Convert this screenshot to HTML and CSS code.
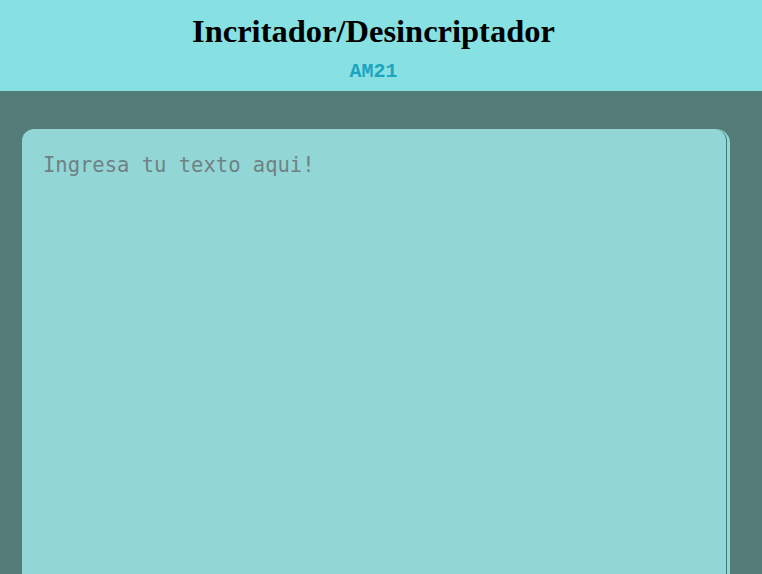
FILE: index.html
```html
<!DOCTYPE html>
<html lang="es">
<head>
<meta charset="utf-8">
<title>Incritador/Desincriptador</title>
<link rel="stylesheet" href="styles.css">
</head>
<body>
<header class="top">
  <h1 class="title">Incritador/Desincriptador</h1>
  <p class="brand">AM21</p>
</header>
<main class="content">
  <div class="pad">
    <div class="pad-inner">
      <span class="placeholder">Ingresa tu texto aqui!</span>
    </div>
  </div>
</main>
</body>
</html>
```

FILE: styles.css
```css
html, body {
  margin: 0;
  padding: 0;
  height: 100%;
}
body {
  background: #537b78;
  overflow: hidden;
}
.top {
  background: #87e0e1;
  height: 91px;
  padding-right: 15px;
  display: flex;
  flex-direction: column;
  align-items: center;
}
.title {
  margin: 12px 0 0;
  font-family: "Liberation Serif", serif;
  font-weight: bold;
  font-size: 32.5px;
  line-height: 38px;
  color: #000;
}
.brand {
  margin: 11px 0 0;
  font-family: "Liberation Mono", monospace;
  font-weight: bold;
  font-size: 20px;
  line-height: 22px;
  color: #1ba5c2;
}
.content {
  padding: 38px 0 0 22px;
}
.pad {
  width: 708px;
  height: 460px;
  background: #93d6d6;
  border-radius: 12px 14px 0 0;
  display: flex;
}
.pad-inner {
  flex: 1;
  margin-right: 3px;
  border-right: 1px solid #3f7a7a;
  border-top-right-radius: 12px;
  padding: 24px 21px 20px;
}
.placeholder {
  font-family: "DejaVu Sans Mono", monospace;
  font-size: 20.5px;
  line-height: 24px;
  color: #6e8283;
}
```
